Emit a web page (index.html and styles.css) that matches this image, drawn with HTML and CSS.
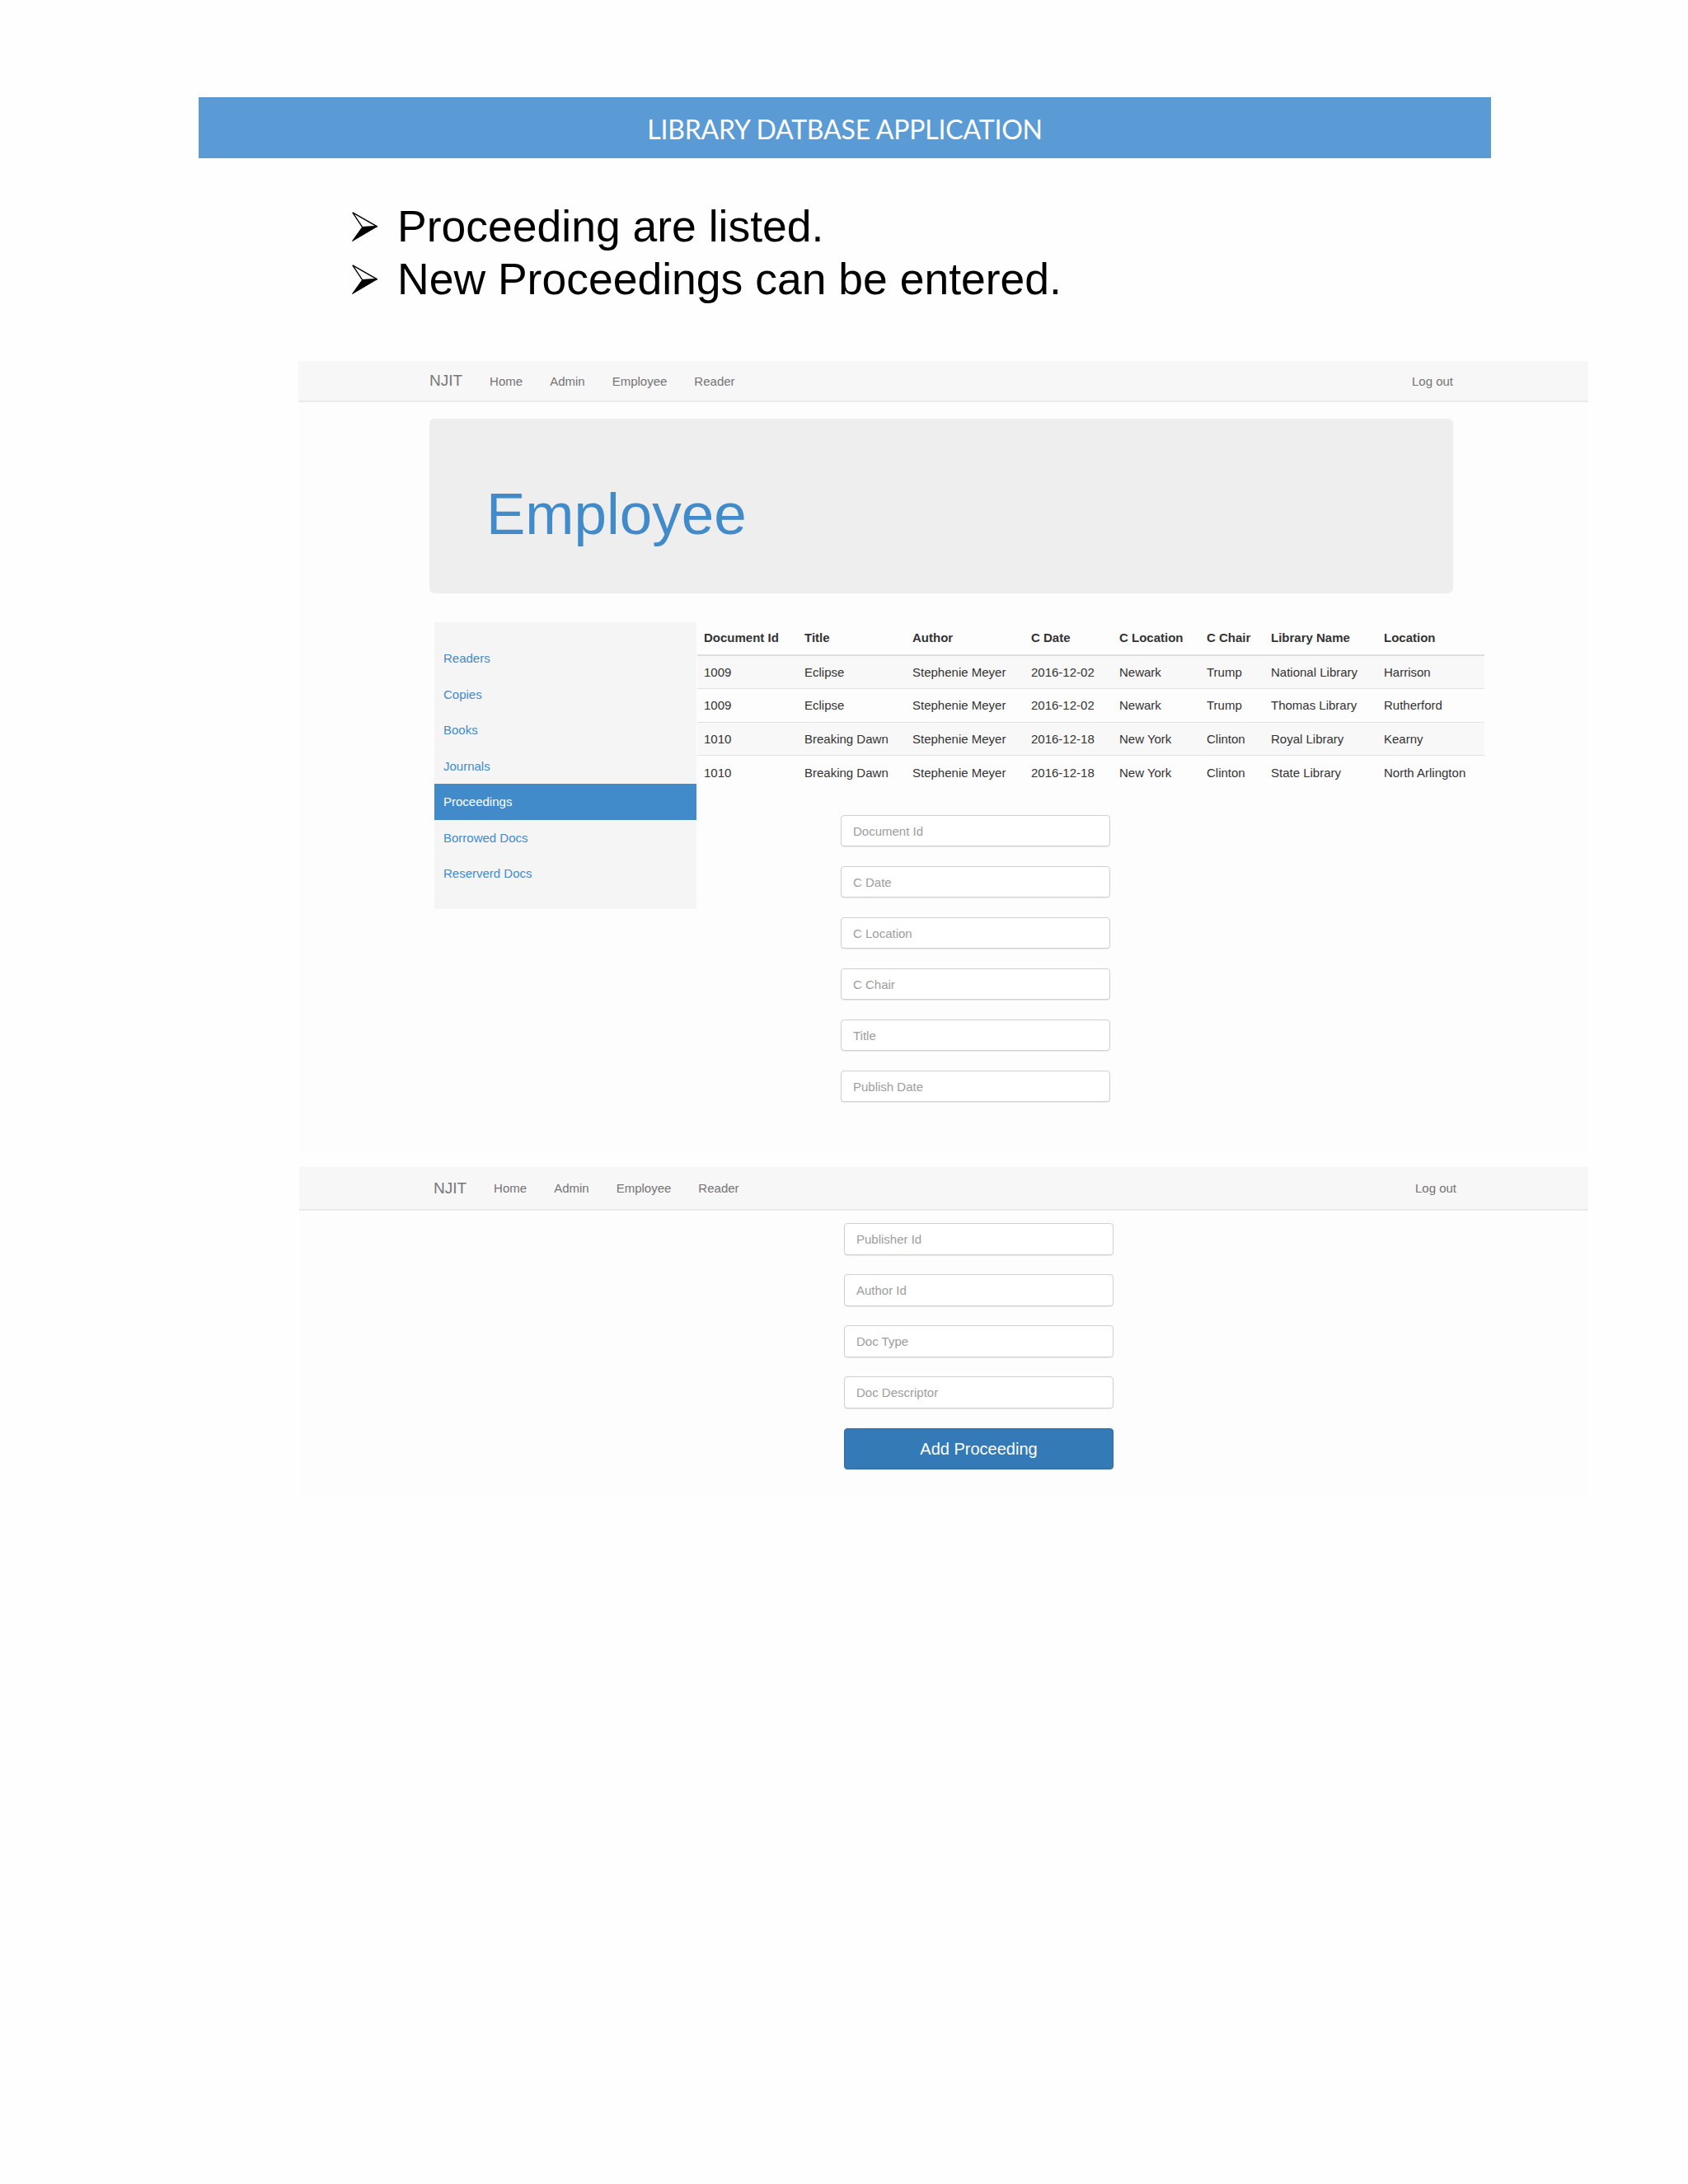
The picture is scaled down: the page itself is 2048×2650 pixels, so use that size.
FILE: index.html
```html
<!DOCTYPE html>
<html lang="en">
<head>
<meta charset="utf-8">
<title>Library Database Application</title>
<link rel="stylesheet" href="styles.css">
</head>
<body>
<div class="page">
  <header class="banner">LIBRARY DATBASE APPLICATION</header>

  <ul class="bullets">
    <li>
      <svg class="arrow" viewBox="0 0 31 36" width="31" height="36" aria-hidden="true">
        <polygon points="0.8,0.8 30.5,17.8 12.6,18.6" fill="#fff" stroke="#000" stroke-width="1.4" stroke-linejoin="miter"/>
        <polygon points="12.6,18.6 30.5,17.8 0.5,35.5" fill="#000" stroke="#000" stroke-width="1"/>
      </svg>
      <span>Proceeding are listed.</span>
    </li>
    <li>
      <svg class="arrow" viewBox="0 0 31 36" width="31" height="36" aria-hidden="true">
        <polygon points="0.8,0.8 30.5,17.8 12.6,18.6" fill="#fff" stroke="#000" stroke-width="1.4" stroke-linejoin="miter"/>
        <polygon points="12.6,18.6 30.5,17.8 0.5,35.5" fill="#000" stroke="#000" stroke-width="1"/>
      </svg>
      <span>New Proceedings can be entered.</span>
    </li>
  </ul>

  <section class="shot shot-one">
    <nav class="navbar">
      <div class="nav-left">
        <span class="brand">NJIT</span>
        <span class="nav-link">Home</span>
        <span class="nav-link">Admin</span>
        <span class="nav-link">Employee</span>
        <span class="nav-link">Reader</span>
      </div>
      <span class="nav-link logout">Log out</span>
    </nav>

    <div class="container">
      <div class="jumbotron">
        <h1>Employee</h1>
      </div>

      <div class="row">
        <aside class="sidebar">
          <a class="side-item">Readers</a>
          <a class="side-item">Copies</a>
          <a class="side-item">Books</a>
          <a class="side-item">Journals</a>
          <a class="side-item active">Proceedings</a>
          <a class="side-item">Borrowed Docs</a>
          <a class="side-item">Reserverd Docs</a>
        </aside>

        <div class="content">
          <table class="data">
            <colgroup>
              <col class="c1"><col class="c2"><col class="c3"><col class="c4">
              <col class="c5"><col class="c6"><col class="c7"><col class="c8">
            </colgroup>
            <thead>
              <tr>
                <th>Document Id</th><th>Title</th><th>Author</th><th>C Date</th>
                <th>C Location</th><th>C Chair</th><th>Library Name</th><th>Location</th>
              </tr>
            </thead>
            <tbody>
              <tr class="odd">
                <td>1009</td><td>Eclipse</td><td>Stephenie Meyer</td><td>2016-12-02</td>
                <td>Newark</td><td>Trump</td><td>National Library</td><td>Harrison</td>
              </tr>
              <tr>
                <td>1009</td><td>Eclipse</td><td>Stephenie Meyer</td><td>2016-12-02</td>
                <td>Newark</td><td>Trump</td><td>Thomas Library</td><td>Rutherford</td>
              </tr>
              <tr class="odd">
                <td>1010</td><td>Breaking Dawn</td><td>Stephenie Meyer</td><td>2016-12-18</td>
                <td>New York</td><td>Clinton</td><td>Royal Library</td><td>Kearny</td>
              </tr>
              <tr>
                <td>1010</td><td>Breaking Dawn</td><td>Stephenie Meyer</td><td>2016-12-18</td>
                <td>New York</td><td>Clinton</td><td>State Library</td><td>North Arlington</td>
              </tr>
            </tbody>
          </table>

          <form class="form form-one">
            <input class="field" type="text" placeholder="Document Id">
            <input class="field" type="text" placeholder="C Date">
            <input class="field" type="text" placeholder="C Location">
            <input class="field" type="text" placeholder="C Chair">
            <input class="field" type="text" placeholder="Title">
            <input class="field" type="text" placeholder="Publish Date">
          </form>
        </div>
      </div>
    </div>
  </section>

  <section class="shot shot-two">
    <nav class="navbar navbar-two">
      <div class="nav-left">
        <span class="brand">NJIT</span>
        <span class="nav-link">Home</span>
        <span class="nav-link">Admin</span>
        <span class="nav-link">Employee</span>
        <span class="nav-link">Reader</span>
      </div>
      <span class="nav-link logout">Log out</span>
    </nav>

    <form class="form form-two">
      <input class="field" type="text" placeholder="Publisher Id">
      <input class="field" type="text" placeholder="Author Id">
      <input class="field" type="text" placeholder="Doc Type">
      <input class="field" type="text" placeholder="Doc Descriptor">
      <button class="btn" type="button">Add Proceeding</button>
    </form>
  </section>
</div>
</body>
</html>
```

FILE: styles.css
```css
* {
  box-sizing: border-box;
}

html, body {
  margin: 0;
  padding: 0;
  background: #fefefe;
}

body {
  font-family: "Liberation Sans", Arial, sans-serif;
  color: #333333;
}

.page {
  width: 2048px;
  min-height: 2650px;
  display: flex;
  flex-direction: column;
}

/* ---------- Slide header ---------- */
.banner {
  margin: 118px 0 0 241px;
  width: 1568px;
  height: 74px;
  background: #5b9bd5;
  border-top: 1px solid #5592cc;
  color: #ffffff;
  font-family: Lato, "Open Sans", sans-serif;
  font-size: 32px;
  letter-spacing: -0.2px;
  display: flex;
  align-items: center;
  justify-content: center;
  padding-top: 2px;
}

.bullets {
  list-style: none;
  margin: 51px 0 0 0;
  padding: 0 0 0 427px;
  font-family: "Liberation Sans", Arial, sans-serif;
  font-size: 53.5px;
  line-height: 64px;
  color: #000000;
}

.bullets li {
  display: flex;
  align-items: center;
  height: 64px;
}

.arrow {
  flex: none;
  margin-right: 24px;
}

/* ---------- Embedded screenshots ---------- */
.shot {
  background: #fefdfe;
}

.shot-one {
  margin: 67px 0 0 362px;
  width: 1565px;
  height: 962px;
}

.shot-two {
  margin: 16px 0 0 363px;
  width: 1564px;
  height: 400px;
}

.navbar {
  height: 50px;
  background: #f8f7f8;
  border-bottom: 2px solid #ecebec;
  display: flex;
  align-items: center;
  justify-content: space-between;
  padding: 0 164px 0 159px;
}

.navbar-two {
  height: 53px;
  padding: 0 160px 0 163px;
}

.nav-left {
  display: flex;
  align-items: center;
  gap: 33px;
}

.brand {
  font-size: 19px;
  color: #777777;
}

.nav-link {
  font-size: 15px;
  color: #747474;
}

.container {
  padding-left: 159px;
  width: 1401px;
}

.jumbotron {
  margin-top: 20px;
  height: 212px;
  background: #efeeef;
  border-radius: 6px;
  padding: 80px 0 0 69px;
}

.jumbotron h1 {
  margin: 0;
  font-size: 71px;
  line-height: 71px;
  font-weight: normal;
  color: #428bca;
}

.row {
  margin-top: 35px;
  padding-left: 6px;
  display: flex;
  align-items: flex-start;
}

/* ---------- Sidebar ---------- */
.sidebar {
  width: 318px;
  height: 348px;
  background: #f5f5f5;
  padding-top: 22px;
  display: flex;
  flex-direction: column;
  flex: none;
}

.side-item {
  height: 43.5px;
  display: flex;
  align-items: center;
  padding-left: 11px;
  font-size: 15px;
  color: #428bca;
}

.side-item.active {
  background: #428bca;
  color: #ffffff;
}

/* ---------- Table ---------- */
.content {
  margin-left: 1px;
  width: 955px;
}

.data {
  width: 955px;
  border-collapse: collapse;
  table-layout: fixed;
  font-size: 15px;
  color: #333333;
}

.c1 { width: 122px; }
.c2 { width: 131px; }
.c3 { width: 144px; }
.c4 { width: 107px; }
.c5 { width: 106px; }
.c6 { width: 78px; }
.c7 { width: 137px; }
.c8 { width: 130px; }

.data th {
  text-align: left;
  font-weight: bold;
  height: 40px;
  padding: 0 8px 2px 8px;
  border-bottom: 2px solid #dddddd;
  white-space: nowrap;
}

.data td {
  height: 40.5px;
  padding: 0 8px;
  border-top: 1px solid #e2e2e2;
  white-space: nowrap;
}

.data tbody tr:first-child td {
  border-top: 0;
}

.data tr.odd td {
  background: #f8f8f8;
}

/* ---------- Forms ---------- */
.form {
  display: flex;
  flex-direction: column;
  gap: 24px;
  width: 327px;
}

.form-one {
  margin: 32px 0 0 174px;
}

.form-two {
  margin: 15px 0 0 661px;
  gap: 23px;
}

.field {
  height: 38px;
  width: 327px;
  border: 1px solid #d0d0d0;
  border-radius: 4px;
  background: #ffffff;
  box-shadow: 0 1px 1px rgba(0, 0, 0, 0.08);
  padding: 0 14px;
  font-family: "Liberation Sans", Arial, sans-serif;
  font-size: 15px;
  color: #555555;
}

.form-two .field {
  height: 39px;
}

.field::placeholder {
  color: #9d9d9d;
}

.btn {
  height: 50px;
  width: 327px;
  margin-top: 1px;
  border: 1px solid #2e6da4;
  border-radius: 4px;
  background: #337ab7;
  color: #ffffff;
  font-family: "Liberation Sans", Arial, sans-serif;
  font-size: 20px;
}
```
